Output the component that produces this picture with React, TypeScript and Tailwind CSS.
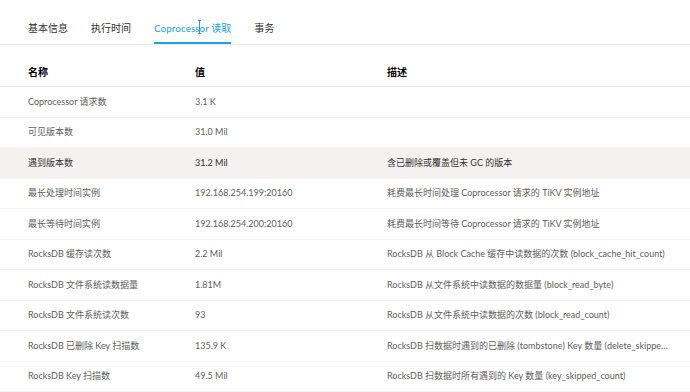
import React from 'react';

type Row = { name: string; value: string; desc: string };

const rows: Row[] = [
  { name: 'Coprocessor 请求数', value: '3.1 K', desc: '' },
  { name: '可见版本数', value: '31.0 Mil', desc: '' },
  { name: '遇到版本数', value: '31.2 Mil', desc: '含已删除或覆盖但未 GC 的版本' },
  { name: '最长处理时间实例', value: '192.168.254.199:20160', desc: '耗费最长时间处理 Coprocessor 请求的 TiKV 实例地址' },
  { name: '最长等待时间实例', value: '192.168.254.200:20160', desc: '耗费最长时间等待 Coprocessor 请求的 TiKV 实例地址' },
  { name: 'RocksDB 缓存读次数', value: '2.2 Mil', desc: 'RocksDB 从 Block Cache 缓存中读数据的次数 (block_cache_hit_count)' },
  { name: 'RocksDB 文件系统读数据量', value: '1.81M', desc: 'RocksDB 从文件系统中读数据的数据量 (block_read_byte)' },
  { name: 'RocksDB 文件系统读次数', value: '93', desc: 'RocksDB 从文件系统中读数据的次数 (block_read_count)' },
  { name: 'RocksDB 已删除 Key 扫描数', value: '135.9 K', desc: 'RocksDB 扫数据时遇到的已删除 (tombstone) Key 数量 (delete_skipped_count)' },
  { name: 'RocksDB Key 扫描数', value: '49.5 Mil', desc: 'RocksDB 扫数据时所有遇到的 Key 数量 (key_skipped_count)' },
];

const tabs = ['基本信息', '执行时间', 'Coprocessor 读取', '事务'];

export default function App() {
  const activeTab = 2;
  const hoverRow = 2;

  return (
    <div
      className="w-[690px] h-[392px] overflow-hidden bg-white relative"
      style={{ fontFamily: 'Lato, "Noto Sans CJK SC", sans-serif' }}
    >
      {/* Tabs */}
      <div className="h-[45px] border-b border-[#edebe9] flex items-end gap-[23px] pl-[28px]">
        {tabs.map((t, i) => (
          <div
            key={t}
            className={`pb-[6px] border-b-2 text-[10px] leading-[16px] whitespace-nowrap ${
              i === activeTab ? 'border-[#1d9fe3] text-[#1d9fe3]' : 'border-transparent text-[#323130]'
            }`}
          >
            {t}
          </div>
        ))}
      </div>

      {/* mouse cursor (I-beam) */}
      <div className="absolute left-[198px] top-[20px] w-[3px] h-[14px] flex flex-col items-center justify-between pointer-events-none">
        <div className="w-[3px] h-px bg-[#1d9fe3]" />
        <div className="w-px flex-1 bg-[#1d9fe3]" />
        <div className="w-[3px] h-px bg-[#1d9fe3]" />
      </div>

      {/* Table header */}
      <div className="h-[42px] border-b border-[#edebe9] flex items-end pb-[7px] text-[10px] leading-[14px] font-semibold text-black">
        <div className="w-[195px] pl-[28px]">名称</div>
        <div className="w-[192px]">值</div>
        <div className="flex-1">描述</div>
      </div>

      {/* Rows */}
      {rows.map((r, i) => (
        <div
          key={r.name}
          className={`h-[30.5px] border-b border-[#f3f2f1] flex items-center text-[9px] leading-[12px] ${
            i === hoverRow ? 'bg-[#f3f2f1] text-[#323130]' : 'text-[#605e5c]'
          }`}
        >
          <div className="w-[195px] pl-[28px] whitespace-nowrap">{r.name}</div>
          <div className="w-[192px] whitespace-nowrap">{r.value}</div>
          <div className="flex-1 min-w-0 truncate pr-[20px]">{r.desc}</div>
        </div>
      ))}
    </div>
  );
}
